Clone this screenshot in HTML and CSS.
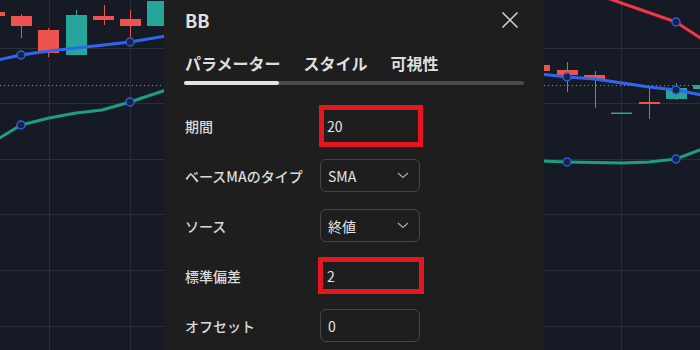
FILE: index.html
```html
<!DOCTYPE html>
<html lang="ja">
<head>
<meta charset="utf-8">
<link rel="stylesheet" href="styles.css">
</head>
<body>
<div class="screen">
  <svg class="chart" width="700" height="350" viewBox="0 0 700 350">
    <rect width="700" height="350" fill="#161a25"/>
    <g stroke="#2a2e39" stroke-width="1">
      <line x1="0" y1="48.5" x2="700" y2="48.5"/>
      <line x1="0" y1="103.5" x2="700" y2="103.5"/>
      <line x1="0" y1="159.5" x2="700" y2="159.5"/>
      <line x1="0" y1="214.5" x2="700" y2="214.5"/>
      <line x1="0" y1="270.5" x2="700" y2="270.5"/>
      <line x1="0" y1="326.5" x2="700" y2="326.5"/>
      <line x1="49.5" y1="0" x2="49.5" y2="350"/>
      <line x1="130.5" y1="0" x2="130.5" y2="350"/>
      <line x1="621.5" y1="0" x2="621.5" y2="350"/>
    </g>
    <line x1="0" y1="85.5" x2="700" y2="85.5" stroke="#3fa9a0" stroke-width="1" stroke-dasharray="1 3"/>
    <!-- left candles -->
    <g fill="#ef5350" stroke="#ef5350" stroke-width="1">
      <rect x="-2" y="12" width="7" height="4" stroke="none"/>
      <line x1="21.5" y1="14" x2="21.5" y2="38"/>
      <rect x="11" y="16" width="21" height="10" stroke="none"/>
      <line x1="48.5" y1="28" x2="48.5" y2="57"/>
      <rect x="38" y="30" width="21" height="23" stroke="none"/>
      <line x1="104.5" y1="5" x2="104.5" y2="25"/>
      <rect x="93" y="16" width="21" height="4" stroke="none"/>
      <line x1="130.5" y1="10" x2="130.5" y2="37"/>
      <rect x="120" y="19" width="21" height="7" stroke="none"/>
    </g>
    <g fill="#26a69a" stroke="#26a69a" stroke-width="1">
      <line x1="76.5" y1="10" x2="76.5" y2="20"/>
      <rect x="66" y="15" width="21" height="40" stroke="none"/>
      <rect x="147" y="1" width="21" height="25" stroke="none"/>
    </g>
    <!-- right candles -->
    <g fill="#ef5350" stroke="#ef5350" stroke-width="1">
      <rect x="543" y="65" width="7" height="6" stroke="none"/>
      <line x1="567.5" y1="62" x2="567.5" y2="92"/>
      <rect x="557" y="70" width="21" height="5" stroke="none"/>
      <line x1="595.5" y1="71" x2="595.5" y2="108"/>
      <rect x="584" y="75" width="21" height="4" stroke="none"/>
      <line x1="649.5" y1="87" x2="649.5" y2="119"/>
      <rect x="639" y="102" width="21" height="2" stroke="none"/>
    </g>
    <g fill="#26a69a" stroke="#26a69a" stroke-width="1">
      <rect x="611" y="112.5" width="21" height="1.5" stroke="none"/>
      <line x1="676.5" y1="83" x2="676.5" y2="100"/>
      <rect x="666" y="88" width="21" height="11" stroke="none"/>
      <rect x="693" y="85" width="10" height="4" stroke="none"/>
    </g>
    <!-- bands -->
    <g fill="none" stroke-width="3" stroke-linejoin="round" stroke-linecap="round">
      <polyline stroke="#1c9e80" points="-2,139 21,125 49,118 76,113 102,110 130,102 166,90"/>
      <polyline stroke="#2f66f0" points="-2,60 21,55 49,51 76,48 104,45 130,42 166,36"/>
      <polyline stroke="#1c9e80" points="540,161 567,162 622,163 649,162 676,159 702,149"/>
      <polyline stroke="#2f66f0" points="540,74 567,77 595,79 622,83 649,87 676,90 702,95"/>
      <polyline stroke="#f23645" points="607,-2 650,13 676,22 702,39"/>
    </g>
    <g fill="#1a2340" stroke="#2f5de0" stroke-width="1.5">
      <circle cx="21" cy="55" r="4"/>
      <circle cx="130" cy="42" r="4"/>
      <circle cx="21" cy="125" r="4"/>
      <circle cx="130" cy="102" r="4"/>
      <circle cx="567" cy="77" r="4"/>
      <circle cx="676" cy="90" r="4"/>
      <circle cx="676" cy="22" r="4"/>
      <circle cx="567" cy="162" r="4"/>
      <circle cx="676" cy="159" r="4"/>
    </g>
  </svg>

  <div class="dialog">
    <div class="head">
      <div class="title">BB</div>
      <svg class="close" width="18" height="18" viewBox="0 0 18 18">
        <path d="M1.5 1.5 L16.5 16.5 M16.5 1.5 L1.5 16.5" stroke="#d6d6d6" stroke-width="1.5" fill="none"/>
      </svg>
    </div>
    <div class="tabs">
      <div class="tab">パラメーター</div>
      <div class="tab">スタイル</div>
      <div class="tab">可視性</div>
    </div>
    <div class="track"><div class="fill"></div></div>
    <div class="form">
      <div class="row">
        <div class="label">期間</div>
        <div class="field hl hl-a"><span class="val">20</span></div>
      </div>
      <div class="row">
        <div class="label">ベースMAのタイプ</div>
        <div class="field select"><span class="val">SMA</span>
          <svg class="chev" width="12" height="7" viewBox="0 0 12 7"><path d="M1 1 L6 5.5 L11 1" stroke="#a8a8a8" stroke-width="1.3" fill="none"/></svg>
        </div>
      </div>
      <div class="row">
        <div class="label">ソース</div>
        <div class="field select"><span class="val">終値</span>
          <svg class="chev" width="12" height="7" viewBox="0 0 12 7"><path d="M1 1 L6 5.5 L11 1" stroke="#a8a8a8" stroke-width="1.3" fill="none"/></svg>
        </div>
      </div>
      <div class="row">
        <div class="label">標準偏差</div>
        <div class="field hl hl-b"><span class="val">2</span></div>
      </div>
      <div class="row">
        <div class="label">オフセット</div>
        <div class="field"><span class="val">0</span></div>
      </div>
    </div>
  </div>
</div>
</body>
</html>
```

FILE: styles.css
```css
* { box-sizing: border-box; }
html, body { margin: 0; padding: 0; }
body {
  width: 700px;
  height: 350px;
  overflow: hidden;
  background: #161a25;
  font-family: "Noto Sans CJK JP", "Noto Sans", sans-serif;
}
.screen {
  position: relative;
  width: 700px;
  height: 350px;
}
.chart {
  display: block;
}
.dialog {
  position: absolute;
  left: 164px;
  top: 0;
  width: 380px;
  height: 350px;
  background: #1e1e1e;
  color: #dcdcdc;
  padding-left: 20px;
}
.head {
  display: flex;
  justify-content: space-between;
  align-items: center;
  height: 40px;
  padding-right: 25px;
  padding-left: 1px;
}
.title {
  font-size: 18px;
  font-weight: 700;
  line-height: 24px;
  color: #e0e0e0;
}
.close {
  display: block;
}
.tabs {
  display: flex;
  gap: 23px;
  padding-left: 1px;
  margin-top: 6px;
  height: 34px;
  align-items: center;
}
.tab {
  font-size: 16px;
  font-weight: 700;
  line-height: 22px;
  color: #dedede;
}
.track {
  width: 340px;
  height: 4px;
  border-radius: 2px;
  background: #4b4b4b;
  margin-top: 1px;
}
.fill {
  width: 95px;
  height: 4px;
  border-radius: 2px;
  background: #e4e4e4;
}
.form {
  display: flex;
  flex-direction: column;
  gap: 17px;
  margin-top: 24px;
}
.row {
  display: flex;
  align-items: center;
  height: 33px;
  padding-left: 1px;
}
.label {
  width: 135px;
  font-size: 14px;
  font-weight: 500;
  line-height: 20px;
  color: #dadada;
}
.field {
  position: relative;
  width: 100px;
  height: 33px;
  border: 1px solid #464646;
  border-radius: 6px;
  display: flex;
  align-items: center;
  padding-left: 7px;
  padding-right: 10px;
  justify-content: space-between;
}
.val {
  font-size: 14px;
  line-height: 20px;
  color: #e6e6e6;
}
.hl {
  border: 5px solid #e4161f;
  border-radius: 0;
  padding-left: 3px;
  margin-left: -1px;
  width: 104px;
}
.hl-a {
  height: 42px;
  margin-top: -8px;
  margin-bottom: -9px;
}
.hl-b {
  height: 37px;
  margin-left: -2px;
  width: 106px;
  padding-left: 4px;
  margin-top: -2px;
  margin-bottom: -2px;
}
.chev {
  display: block;
}
```
